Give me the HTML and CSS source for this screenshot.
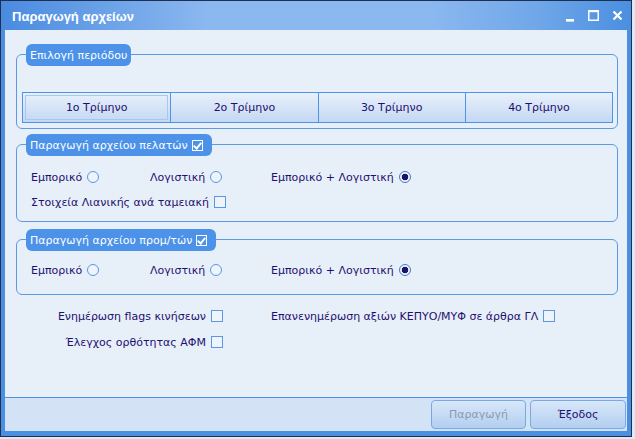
FILE: index.html
```html
<!DOCTYPE html>
<html lang="el">
<head>
<meta charset="utf-8">
<title>Παραγωγή αρχείων</title>
<link rel="stylesheet" href="styles.css">
</head>
<body>
<div class="window">
  <div class="titlebar">
    <span class="title">Παραγωγή αρχείων</span>
    <svg class="controls" width="60" height="16" viewBox="0 0 60 16">
      <rect x="2" y="11" width="8" height="2.6" fill="#fff"/>
      <rect x="24.75" y="2.75" width="9.5" height="9.5" fill="none" stroke="#fff" stroke-width="1.5"/>
      <rect x="24" y="2" width="11" height="2.2" fill="#fff"/>
      <path d="M49.5 3.5 L57.5 11.5 M57.5 3.5 L49.5 11.5" stroke="#fff" stroke-width="2.2" fill="none"/>
    </svg>
  </div>
  <div class="client">
    <div class="content">
      <section class="group">
        <div class="legend">Επιλογή περιόδου</div>
        <div class="box box-period">
          <div class="segments">
            <div class="seg active">1ο Τρίμηνο</div>
            <div class="seg">2ο Τρίμηνο</div>
            <div class="seg">3ο Τρίμηνο</div>
            <div class="seg">4ο Τρίμηνο</div>
          </div>
        </div>
      </section>

      <section class="group group-2">
        <div class="legend">Παραγωγή αρχείου πελατών <span class="check check-light"></span></div>
        <div class="box box-customers">
          <div class="radios">
            <div class="opt">Εμπορικό <span class="radio"></span></div>
            <div class="opt">Λογιστική <span class="radio"></span></div>
            <div class="opt">Εμπορικό + Λογιστική <span class="radio on"></span></div>
          </div>
          <div class="opt opt-retail">Στοιχεία Λιανικής ανά ταμειακή <span class="check"></span></div>
        </div>
      </section>

      <section class="group group-3">
        <div class="legend">Παραγωγή αρχείου προμ/τών <span class="check check-light"></span></div>
        <div class="box box-suppliers">
          <div class="radios">
            <div class="opt">Εμπορικό <span class="radio"></span></div>
            <div class="opt">Λογιστική <span class="radio"></span></div>
            <div class="opt">Εμπορικό + Λογιστική <span class="radio on"></span></div>
          </div>
        </div>
      </section>

      <div class="options">
        <div class="opt opt-right">Ενημέρωση flags κινήσεων <span class="check"></span></div>
        <div class="opt">Επανενημέρωση αξιών ΚΕΠΥΟ/ΜΥΦ σε άρθρα ΓΛ <span class="check"></span></div>
        <div class="opt opt-right">Έλεγχος ορθότητας ΑΦΜ <span class="check"></span></div>
      </div>
    </div>
    <div class="footer">
      <div class="btn disabled">Παραγωγή</div>
      <div class="btn">Έξοδος</div>
    </div>
  </div>
</div>
</body>
</html>
```

FILE: styles.css
```css
html, body {
  margin: 0;
  padding: 0;
}
body {
  background: #dfe8f5;
  font-family: "DejaVu Sans", "Liberation Sans", sans-serif;
  font-size: 11px;
  color: #1f0f6f;
}
.window {
  width: 632px;
  height: 437px;
  box-sizing: border-box;
  border: 1px solid #1f2f52;
  background: #4a8fe0;
  display: flex;
  flex-direction: column;
}
.titlebar {
  height: 29px;
  flex: none;
  display: flex;
  align-items: center;
  justify-content: space-between;
  padding: 0 7px 0 11px;
  background: linear-gradient(90deg, #4a8be0 0%, #8bb8ef 33%, #8bb8ef 68%, #70a7e9 85%, #4a8fe0 100%);
}
.title {
  color: #fff;
  font-family: "Liberation Sans", sans-serif;
  font-weight: bold;
  font-size: 13px;
  padding-top: 1px;
}
.controls {
  display: block;
  margin-top: 1px;
}
.client {
  flex: 1;
  margin: 0 4px 5px;
  display: flex;
  flex-direction: column;
  background: #e7eff9;
}
.content {
  flex: 1;
  padding: 14px 9px 0 11px;
}
.group {
  display: flex;
  flex-direction: column;
}
.group-2 {
  margin-top: 5px;
}
.group-3 {
  margin-top: 7px;
}
.legend {
  align-self: flex-start;
  position: relative;
  z-index: 1;
  height: 22px;
  margin-left: 10px;
  padding: 0 4px 0 4px;
  box-sizing: border-box;
  background: #4b92e8;
  color: #fff;
  border-radius: 6px;
  display: flex;
  align-items: center;
  gap: 4px;
  font-size: 11px;
}
.box {
  margin-top: -12px;
  border: 1px solid #5c9ae6;
  border-radius: 6px;
}
.box-period {
  padding: 37px 4px 5px 5px;
}
.box-customers {
  height: 78px;
  box-sizing: border-box;
  padding: 24px 0 0 14px;
  display: flex;
  flex-direction: column;
  gap: 9px;
}
.box-suppliers {
  height: 56px;
  box-sizing: border-box;
  padding: 22px 0 0 14px;
}
.segments {
  display: grid;
  grid-template-columns: repeat(4, 1fr);
  height: 31px;
  box-sizing: border-box;
  border: 1px solid #4d93e8;
}
.seg {
  display: flex;
  align-items: center;
  justify-content: center;
  background: linear-gradient(#e9f0fb, #c3d8f3);
  font-size: 11px;
  color: #1f0f6f;
}
.seg + .seg {
  border-left: 1px solid #4d93e8;
}
.seg.active {
  outline: 1px solid #a8c7ef;
  outline-offset: -3px;
}
.radios {
  display: grid;
  grid-template-columns: 119px 121px auto;
  height: 16px;
  align-items: center;
}
.opt {
  display: flex;
  align-items: center;
  gap: 5px;
  height: 16px;
  white-space: nowrap;
}
.radio {
  width: 12px;
  height: 12px;
  box-sizing: border-box;
  border: 1px solid #5b97e2;
  border-radius: 50%;
  background: #eef4fc;
  flex: none;
}
.radio.on {
  border-color: #4778c4;
  background: radial-gradient(circle, #1c1266 0 3px, #eef4fc 3.6px);
}
.check {
  width: 12px;
  height: 12px;
  box-sizing: border-box;
  border: 1px solid #5b97e2;
  background: #eef4fc;
  flex: none;
  position: relative;
}
.check-light {
  width: 11px;
  height: 11px;
  border-color: #fff;
  background: transparent;
  margin-right: 5px;
}
.check-light::after {
  content: "";
  position: absolute;
  left: 2px;
  top: 0px;
  width: 3px;
  height: 6px;
  border-right: 2px solid #fff;
  border-bottom: 2px solid #fff;
  transform: rotate(40deg);
}
.options {
  margin-top: 13px;
  display: grid;
  grid-template-columns: 207px auto;
  column-gap: 48px;
  row-gap: 10px;
}
.opt-right {
  justify-content: flex-end;
}
.footer {
  height: 33px;
  flex: none;
  border-top: 1px solid #4a90e2;
  background: #d3e3f5;
  display: flex;
  justify-content: flex-end;
  align-items: center;
  gap: 4px;
  padding-right: 1px;
}
.btn {
  width: 96px;
  height: 29px;
  box-sizing: border-box;
  border: 1px solid #78a9e6;
  border-radius: 4px;
  background: linear-gradient(#d8e7f9, #b3cef0);
  display: flex;
  align-items: center;
  justify-content: center;
  font-size: 11px;
  color: #1f0f6f;
}
.btn.disabled {
  width: 95px;
  color: #8b99ae;
}
```
